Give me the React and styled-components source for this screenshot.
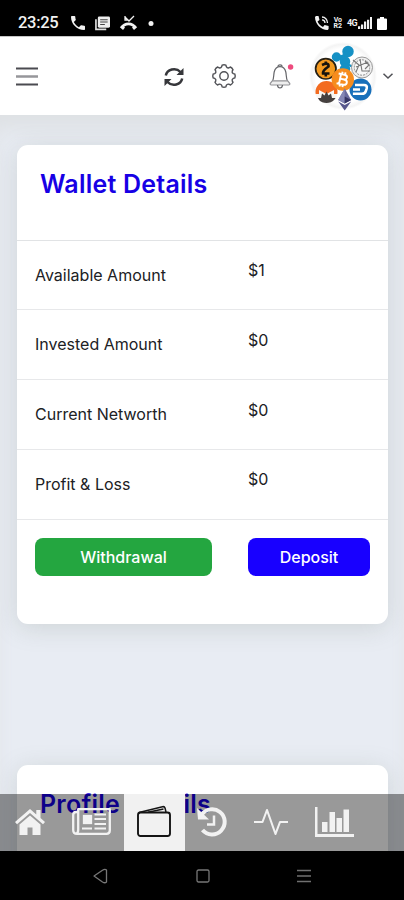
import React from "react";
import styled, { createGlobalStyle } from "styled-components";

const GlobalStyle = createGlobalStyle`
  * { box-sizing: border-box; }
  body { margin: 0; background: #000; }
  button { font: inherit; border: 0; padding: 0; }
  svg { display: block; flex: none; overflow: visible; }
`;

const Screen = styled.div`
  width: 404px;
  height: 900px;
  display: flex;
  flex-direction: column;
  overflow: hidden;
  background: #000;
  font-family: Inter, "Liberation Sans", sans-serif;
`;

const StatusBar = styled.div`
  height: 36px;
  flex: none;
  padding: 10px 17px 0 18px;
  display: flex;
  justify-content: space-between;
  background: #000;
  color: #f2f2f2;
`;

const StatusGroup = styled.div`
  display: flex;
  align-items: center;
  height: 26px;
  gap: ${(p) => p.$gap}px;
`;

const Clock = styled.span`
  font: 500 16.5px/28px Roboto, sans-serif;
  letter-spacing: -0.3px;
  width: 42px;
  margin-right: 1px;
  white-space: nowrap;
`;

const NetworkText = styled.span`
  font: 700 ${(p) => p.$size || 7}px/6px Roboto, sans-serif;
  letter-spacing: ${(p) => (p.$size ? "-0.7px" : "0")};
  text-align: center;
  white-space: pre;
`;

const Header = styled.header`
  height: 79px;
  flex: none;
  display: flex;
  align-items: center;
  padding: 0 11px 0 16px;
  background: #fff;
  border-top: 1px solid #c6c6c6;
`;

const IconButton = styled.button`
  background: none;
  display: flex;
  margin-left: ${(p) => p.$ml || 0}px;
`;

const Page = styled.main`
  height: 736px;
  flex: none;
  position: relative;
  overflow: hidden;
  padding: 30px 16px 0 17px;
  background: #e8ecf3;
  box-shadow: inset 0 20px 20px -6px #dee1e4;
`;

const Card = styled.section`
  height: 479px;
  margin-bottom: 141px;
  background: #fff;
  border-radius: 11px;
  box-shadow: 0 4px 24px rgba(125, 137, 125, 0.24);
`;

const CardHead = styled.div`
  height: 95.5px;
  padding: 23px 23px 0;
  border-bottom: 1px solid #e1e3e5;
`;

const Title = styled.h2`
  margin: 0;
  font-size: 25px;
  line-height: 32px;
  font-weight: 620;
  letter-spacing: 0.22px;
  color: #1700e5;
`;

const Row = styled.div`
  height: 69.75px;
  padding: 0 18px;
  display: grid;
  grid-template-columns: 213px 1fr;
  border-bottom: 1px solid #e7e8ea;
  color: #202124;
  font-size: 16px;
  line-height: 20px;
`;

const Label = styled.span`
  padding-top: 24px;
`;

const Amount = styled.span`
  padding-top: 19.5px;
`;

const Actions = styled.div`
  display: flex;
  justify-content: space-between;
  padding: 18.5px 18px 0;
`;

const ActionButton = styled.button`
  width: ${(p) => p.$w}px;
  height: 38px;
  border-radius: 8px;
  background: ${(p) => p.$bg};
  color: #fff;
  font-size: 16px;
  font-weight: 500;
  line-height: 38px;
`;

const TabBar = styled.nav`
  position: absolute;
  left: 0;
  right: 0;
  bottom: 0;
  height: 57px;
  display: flex;
  background: rgba(0, 0, 0, 0.4);
`;

const Tab = styled.button`
  width: ${(p) => p.$w}px;
  height: 57px;
  padding: 0 2px 2px 0;
  display: flex;
  align-items: center;
  justify-content: center;
  background: ${(p) => (p.$active ? "#f1f1f1" : "transparent")};
  color: ${(p) => (p.$active ? "#151515" : "#f2f2f2")};
`;

const SystemNav = styled.div`
  height: 49px;
  flex: none;
  background: #000;
  display: flex;
  justify-content: space-between;
  align-items: center;
  padding: 1px 93px 0 92px;
`;

const Phone = () => (
  <svg width="14" height="14" viewBox="3 3 18 18" fill="currentColor">
    <path d="M6.600 10.800c1.400 2.800 3.800 5.200 6.600 6.600l2.200-2.200c.3-.3.7-.4 1-.2 1.100.4 2.300.6 3.600.6.6 0 1 .4 1 1V20c0 .6-.4 1-1 1C10.600 21 3 13.400 3 4c0-.6.4-1 1-1h3.500c.6 0 1 .4 1 1 0 1.300.2 2.500.6 3.600.1.300 0 .7-.2 1z" />
  </svg>
);

const NewsStatus = () => (
  <svg width="15" height="15" viewBox="0 0 16 15" fill="none">
    <path d="M1 3v10.800h11" stroke="#ddd" strokeWidth="1.800" />
    <rect x="3" y="0" width="13" height="12" rx="1.500" fill="#eee" />
    <path d="M5.500 3.500h8M5.500 6h8M5.500 8.500h5" stroke="#444" strokeWidth="1.100" />
  </svg>
);

const MissedCall = () => (
  <svg width="17" height="14" viewBox="0 0 17 14" fill="none" stroke="currentColor">
    <path d="M5 0v4h3M5 1l4 4 5-5" strokeWidth="1.300" />
    <path d="M1 12c4-5.500 11-5.500 15 0" strokeWidth="2.800" />
    <path d="M.5 11.500l2-2 2.500 2-2 2.500zM16.500 11.500l-2-2-2.500 2 2 2.500z" fill="currentColor" stroke="none" />
  </svg>
);

const Dot = () => (
  <svg width="5" height="5"><circle cx="4" cy="2.500" r="2.500" fill="currentColor" /></svg>
);

const CallWaves = () => (
  <svg width="14" height="14" viewBox="0 0 14 14" fill="currentColor">
    <path d="M1 0h2.500l1 4-2 1.600c1.200 2.500 3 4.200 5.500 5.400l1.600-2 4 1V13l-1 1C6 14 0 8 0 1z" />
    <path d="M7 1c3 0 5.500 2.500 5.500 6M7 3.800c1.700 0 3 1.400 3 3.200" fill="none" stroke="currentColor" strokeWidth="1.300" />
  </svg>
);

const Signal = () => (
  <svg width="14" height="12" viewBox="0 0 14 13" preserveAspectRatio="none" fill="currentColor">
    <path d="M0 10h2.200v3H0zM3 8h2.200v5H3zM6 5h2.200v8H6zM9 3h2.200v10H9zM12 0h2v13h-2z" />
  </svg>
);

const Battery = () => (
  <svg width="10" height="13" viewBox="0 0 10 13" fill="#fff">
    <path d="M3 0h4v1.500h2a1 1 0 0 1 1 1V12a1 1 0 0 1-1 1H1a1 1 0 0 1-1-1V2.500a1 1 0 0 1 1-1h2z" />
  </svg>
);

const Menu = () => (
  <svg width="22" height="19" viewBox="0 0 22 19">
    <path d="M0 1.500h22M0 17.500h22" stroke="#4b4b50" strokeWidth="2" />
    <path d="M0 9.500h22" stroke="#96969a" strokeWidth="2.500" />
  </svg>
);

const Refresh = () => (
  <svg width="20" height="20" viewBox="0 -1 20 20" fill="none" stroke="#36373b" strokeWidth="2.500">
    <path d="M1.800 8.500C3 2.500 11.500-.3 16.500 5" />
    <path d="M18.200 11.500C17 17.500 8.500 20.300 3.500 15" />
    <path d="M19.500 1v7h-7zM.5 19v-7h7z" fill="#36373b" stroke="none" />
  </svg>
);

const gearPath = Array.from({ length: 8 }, (_, i) => {
  const at = (r, d) => {
    const a = ((i * 45 + d) * Math.PI) / 180;
    return `${(12 + r * Math.cos(a)).toFixed(2)} ${(12 + r * Math.sin(a)).toFixed(2)}`;
  };
  return `${i ? "L" : "M"}${at(9.6, -14)}L${at(11, -10)}Q${at(11.6, 0)} ${at(11, 10)}L${at(9.6, 14)}Q${at(8.3, 22.5)} ${at(9.6, 31)}`;
}).join("") + "Z";

const Gear = () => (
  <svg width="24" height="24" viewBox="0 0 24 24" fill="none" stroke="#505156" strokeWidth="1.400">
    <path d={gearPath} />
    <circle cx="12" cy="12" r="4.200" />
  </svg>
);

const Bell = () => (
  <svg width="24" height="25" viewBox="0 0 24 25" fill="none" stroke="#65666a" strokeWidth="1.200">
    <path d="M3.500 17C5 14.500 4.500 11 5.200 8c.8-3.500 3.100-5.400 5.800-5.400S16 4.500 16.800 8c.7 3 .2 6.500 1.700 9" />
    <path d="M3.300 16.800h15.400l2 2.500c.5 1-.2 1.700-1 1.700H2.300c-.8 0-1.500-.7-1-1.700z" fill="#eee" stroke="#929296" />
    <path d="M9 2.500C9 .2 13 .2 13 2.500M8.500 21c.3 4 4.700 4 5 0" />
    <circle cx="21.600" cy="3" r="2.700" fill="#ee4b7e" stroke="none" />
  </svg>
);

const CoinAvatar = () => (
  <svg width="66" height="66" viewBox="312 44 66 66">
    <defs>
      <radialGradient id="disc">
        <stop offset="0.800" stopColor="#fff" />
        <stop offset="0.930" stopColor="#f4f4f4" />
        <stop offset="1" stopColor="#fff" />
      </radialGradient>
      <clipPath id="monero"><circle cx="326.500" cy="93" r="11" /></clipPath>
    </defs>
    <circle cx="343" cy="77" r="34" fill="url(#disc)" />
    <g stroke="#1691c5" strokeWidth="2.500" fill="#1691c5">
      <path d="M337 58l8 4 3-9M345 61v10M345 64l8 4" />
      <circle cx="348" cy="52.500" r="4.500" />
      <circle cx="336.500" cy="58" r="3.500" />
      <circle cx="345" cy="62.500" r="4" />
      <circle cx="345" cy="70" r="4" />
    </g>
    <circle cx="362" cy="68.500" r="10.500" fill="#eee" stroke="#999" strokeWidth="1" />
    <circle cx="362" cy="68.500" r="7.700" fill="#f8f8f8" stroke="#777" strokeWidth=".8" strokeDasharray="2 1" />
    <path d="M353 61l6 5-3 7M360 60l2 12h8M356 68l12-5M365 62l4 4-4 4" fill="none" stroke="#777" strokeWidth="1.100" />
    <circle cx="325.800" cy="69.800" r="10.200" fill="#f59a20" stroke="#262015" strokeWidth="1.700" />
    <path d="M322 66q7-3 6.500 1.500-6 4-5.500 7h6.500M325.800 62.500V65M325.800 74.500V77.500" fill="none" stroke="#17130e" strokeWidth="2.600" />
    <g clipPath="url(#monero)">
      <rect x="315" y="82" width="23" height="23" fill="#f8f5f2" />
      <path d="M315 82h23v13h-4v-4l-7.500 4-7.500-4v4h-4z" fill="#f36b20" />
      <path d="M318 99l3 0 1-4.500 2.500 2 2-4 2 4 2.500-2 1 4.500h4l-5 7h-10z" fill="#45403f" />
    </g>
    <circle cx="360.500" cy="90.500" r="11" fill="#176fba" />
    <path d="M355 86h9q3.500 0 2.700 3.300l-.8 2.500q-.8 3-4 3h-9M353 90.500h7" fill="none" stroke="#fff" strokeWidth="2.600" />
    <circle cx="342.800" cy="80.500" r="11.200" fill="#f68c1d" />
    <g transform="rotate(12 342.800 80.500)" fill="none" stroke="#fff" strokeWidth="1.900">
      <path d="M340 75.500v10M337.500 75.500h6c4 0 4 4.700 0 4.700h-3.500h4c4.500 0 4.500 5.300 0 5.300h-6.500M341 73v2.500M344 73v2.500M341 85.500V88M344 85.500V88" />
    </g>
    <path d="M344.700 89.500l-6.500 11.500 6.500 3.500 6.500-3.500z" fill="#68699e" />
    <path d="M344.700 89.500v15l-6.500-3.500z" fill="#8587b6" />
    <path d="M344.700 97.500l6.500 3.500-6.500 3.500z" fill="#343363" />
    <path d="M338.200 102.500l6.500 9 6.500-9-6.500 3.500z" fill="#57578d" />
  </svg>
);

const Chevron = () => (
  <svg width="10" height="6" viewBox="0 0 10 6" fill="none" stroke="#505156" strokeWidth="1.500">
    <path d="M.5.7L5 5 9.500.7" />
  </svg>
);

const Home = () => (
  <svg width="30" height="26" viewBox="0 0 30 26" fill="currentColor">
    <path d="M15 0L0 13l2 2.300L15 4l13 11.300 2-2.300-4.500-4V1h-4.200v4.500z" />
    <path d="M15 6.500L4.500 15.500V26h8v-7.500h5V26h8V15.500z" />
  </svg>
);

const Newspaper = () => (
  <svg width="39" height="27" viewBox="0 0 39 27" fill="none" stroke="currentColor" strokeWidth="2.300">
    <path d="M6 4H4Q1.200 4 1.200 7v15Q1.200 25.800 5 25.800h29.500q3.300 0 3.300-3.300V1.200H6.200V22q0 3.800-3 3.800" strokeLinejoin="round" />
    <rect x="12" y="8" width="7" height="7" fill="currentColor" />
    <path d="M22.500 6.500H34M22.500 11H34M22.500 16H34M10 20.500h10M22.500 20.500H34" strokeWidth="2" />
  </svg>
);

const Wallet = () => (
  <svg width="34" height="31" viewBox="0 0 34 31" fill="none" stroke="currentColor" strokeWidth="1.900" strokeLinejoin="round">
    <rect x="1" y="6.500" width="32" height="23.500" rx="2.500" />
    <path d="M2 6.500L25.500.7q2-.4 2.500 1.300l1 4M11 6.300L26.500 3" strokeWidth="1.500" />
  </svg>
);

const History = () => (
  <svg width="30" height="30" viewBox="0 0 30 30" fill="none" stroke="currentColor">
    <path d="M4.500 8A12.600 12.600 0 1 1 5.500 23" strokeWidth="4" />
    <path d="M0 1l1 11.500h11z" fill="currentColor" stroke="none" />
    <path d="M17 8.500v9h-7" strokeWidth="2.500" />
  </svg>
);

const Pulse = () => (
  <svg width="34" height="26" viewBox="0 0 34 26" fill="none" stroke="currentColor" strokeWidth="2.100" strokeLinejoin="round">
    <path d="M0 13h8.500L13 1l8.500 24L26 13h8" />
  </svg>
);

const Chart = () => (
  <svg width="39" height="30" viewBox="0 0 39 30" fill="currentColor">
    <path d="M0 0h2.500v27H39v3H0zM7 15h5.500v10H7zM14.500 5H20v20h-5.500zM21.500 11H27v14h-5.500zM28.500 2.500H34V25h-5.500z" />
  </svg>
);

const BackKey = () => (
  <svg width="16" height="16" viewBox="0 0 16 16" fill="none" stroke="#777" strokeWidth="1.300" strokeLinejoin="round">
    <path d="M14.500 2v12q-1.500 1.500-4 0L2 8l8.500-5.700Q13 .7 14.500 2z" />
  </svg>
);

const HomeKey = () => (
  <svg width="14" height="14"><rect x="1" y="1" width="12" height="12" rx="1.500" fill="none" stroke="#777" strokeWidth="1.300" /></svg>
);

const MenuKey = () => (
  <svg width="14" height="14"><path d="M0 1.500h14M0 7h14M0 12.500h14" stroke="#707070" strokeWidth="1.400" /></svg>
);

const balances = [
  ["Available Amount", "$1"],
  ["Invested Amount", "$0"],
  ["Current Networth", "$0"],
  ["Profit & Loss", "$0"],
];

const tabs = [
  ["Home", 61, Home],
  ["News", 63, Newspaper],
  ["Wallet", 61, Wallet],
  ["History", 56, History],
  ["Activity", 62, Pulse],
  ["Statistics", 64, Chart],
];

export default function App() {
  return (
    <Screen>
      <GlobalStyle />
      <StatusBar>
        <StatusGroup $gap={10}>
          <Clock>23:25</Clock>
          <Phone /><NewsStatus /><MissedCall /><Dot />
        </StatusGroup>
        <StatusGroup $gap={5}>
          <CallWaves />
          <NetworkText>{"Vo\nR2"}</NetworkText>
          <StatusGroup $gap={1}>
            <NetworkText $size={9}>4G</NetworkText><Signal />
          </StatusGroup>
          <Battery />
        </StatusGroup>
      </StatusBar>
      <Header>
        <IconButton aria-label="Menu"><Menu /></IconButton>
        <IconButton $ml={126} aria-label="Refresh"><Refresh /></IconButton>
        <IconButton $ml={28} aria-label="Settings"><Gear /></IconButton>
        <IconButton $ml={33} aria-label="Notifications"><Bell /></IconButton>
        <IconButton $ml={19} aria-label="Account"><CoinAvatar /></IconButton>
        <IconButton $ml={5} aria-label="Expand"><Chevron /></IconButton>
      </Header>
      <Page>
        <Card>
          <CardHead><Title>Wallet Details</Title></CardHead>
          {balances.map(([label, value]) => (
            <Row key={label}><Label>{label}</Label><Amount>{value}</Amount></Row>
          ))}
          <Actions>
            <ActionButton $w={177} $bg="#24a640">Withdrawal</ActionButton>
            <ActionButton $w={122} $bg="#1800ff">Deposit</ActionButton>
          </Actions>
        </Card>
        <Card>
          <CardHead><Title>Profile Details</Title></CardHead>
        </Card>
        <TabBar>
          {tabs.map(([name, width, Icon]) => (
            <Tab key={name} $w={width} $active={name === "Wallet"} aria-label={name}><Icon /></Tab>
          ))}
        </TabBar>
      </Page>
      <SystemNav><BackKey /><HomeKey /><MenuKey /></SystemNav>
    </Screen>
  );
}
